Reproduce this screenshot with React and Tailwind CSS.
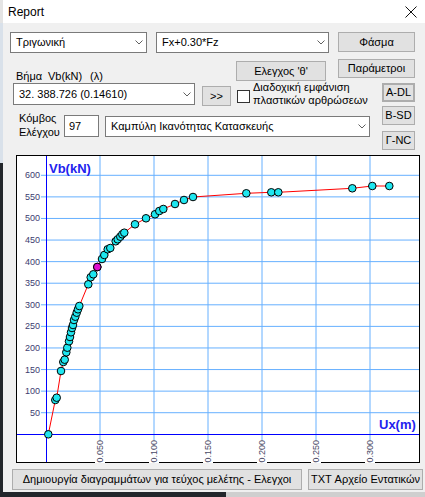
// Report window — capacity curve (pushover) viewer.
// Layout by flow: title, two control rows, control block with side buttons, chart, bottom buttons.

const Y0 = 434.3 // pixel y of Vb = 0
const KY = 0.43167 // px per kN
const yOf = (v) => Y0 - v * KY

// Curve points, page coordinates (chart svg uses a viewBox in page coords).
const PUNTOS = [
  [48.3, 434.3], [55.3, 400], [56.7, 397.7], [61, 371], [63.3, 362], [64.7, 359.7],
  [66.3, 352.3], [67.3, 347.7], [69, 341.3], [70, 337], [71, 332.3], [72, 328],
  [73, 325], [74, 320], [75.3, 316.7], [76.7, 312.7], [78, 309.3], [79.3, 306],
  [88.3, 284.3], [90.7, 277.3], [93.3, 274.3], [97.3, 267], [102, 259], [104.3, 255],
  [107.7, 249.3], [110.3, 248], [115.7, 241.3], [117.7, 239.3], [120.3, 236.7],
  [122.3, 234.3], [124.3, 232.7], [135, 224.3], [146, 218.3], [155, 214.3],
  [159.3, 211], [163.3, 209], [175, 204], [184, 200], [193, 197], [246.3, 193.3],
  [271.3, 192.3], [278.3, 192.3], [352.3, 188.3], [372.3, 186], [389.3, 186],
]
const MAGENTA = [97.3, 267]

const VX = [100, 154, 208, 262, 316, 370]
const XLAB = ['0.050', '0.100', '0.150', '0.200', '0.250', '0.300']
const YV = [50, 100, 150, 200, 250, 300, 350, 400, 450, 500, 550, 600]

function Chevron() {
  return (
    <svg width="8" height="5" viewBox="0 0 8 5" fill="none" stroke="#606060" strokeWidth="1">
      <path d="M0.5 0.5 L4 4 L7.5 0.5" />
    </svg>
  )
}

function Combo({ className, children }) {
  return (
    <div className={`flex items-center justify-between bg-white border border-[#7a7a7a] pl-[5px] pr-[3px] ${className}`}>
      <span className="whitespace-nowrap">{children}</span>
      <Chevron />
    </div>
  )
}

function Boton({ className, children }) {
  return (
    <div className={`flex items-center justify-center bg-[#e1e1e1] border border-[#adadad] whitespace-nowrap ${className}`}>
      {children}
    </div>
  )
}

function Grafico() {
  const linea = PUNTOS.map((p) => p.join(',')).join(' ')
  return (
    <svg width="404" height="308" viewBox="16 155 404 308" className="block">
      <rect x="16.5" y="155.5" width="403" height="307" fill="#fff" stroke="#000" />
      {YV.map((v) => (
        <line key={v} x1="41" x2="419" y1={yOf(v)} y2={yOf(v)} stroke="#66b0ff" strokeWidth="1" />
      ))}
      {VX.map((x) => (
        <line key={x} x1={x} x2={x} y1="156" y2="462" stroke="#66b0ff" strokeWidth="1" />
      ))}
      <line x1="46.5" x2="46.5" y1="156" y2="462" stroke="#0000ff" />
      <line x1="17" x2="419" y1="434.5" y2="434.5" stroke="#0000ff" />
      {YV.map((v) => (
        <text key={v} x="40" y={yOf(v)} textAnchor="end" dominantBaseline="central" fontSize="9" fill="#3c3c70" fontFamily="Liberation Sans, Arial, sans-serif">
          {v}
        </text>
      ))}
      {VX.map((x, i) => (
        <g key={x} transform={`translate(${x},440) rotate(-90)`}>
          <rect x="-23" y="-5" width="23" height="10" fill="#fff" />
          <text x="0" y="0" textAnchor="end" dominantBaseline="central" fontSize="9" fill="#4a4a66" fontFamily="Liberation Sans, Arial, sans-serif">
            {XLAB[i]}
          </text>
        </g>
      ))}
      <text x="49" y="173" fontSize="13" fontWeight="bold" fill="#2222ee" fontFamily="Liberation Sans, Arial, sans-serif">Vb(kN)</text>
      <text x="379" y="429" fontSize="13" fontWeight="bold" fill="#2222ee" fontFamily="Liberation Sans, Arial, sans-serif">Ux(m)</text>
      <polyline points={linea} fill="none" stroke="#ff0000" strokeWidth="1" />
      {PUNTOS.map(([x, y], i) => (
        <circle key={i} cx={x} cy={y} r="3.8" fill="#1fe6ef" stroke="#000" strokeWidth="1" />
      ))}
      <circle cx={MAGENTA[0]} cy={MAGENTA[1]} r="3.8" fill="#e010d0" stroke="#000" strokeWidth="1" />
    </svg>
  )
}

export default function App() {
  return (
    <div className="w-[425px] h-[497px] flex flex-col overflow-hidden font-['Liberation_Sans',Arial,sans-serif] text-[11px] text-black">
      <div className="flex h-[492px]">
        {/* strip of the window behind */}
        <div className="w-[3px] flex flex-col">
          <div className="h-[23px] bg-[#e4e4e4]" />
          <div className="h-[140px] bg-[#d9e1ea]" />
          <div className="flex-1 bg-[#22262b]" />
        </div>

        <div className="flex-1 flex flex-col bg-[#f0f0f0]">
          {/* title bar */}
          <div className="h-[23px] bg-white flex items-center justify-between pl-[5px] pr-[8px]">
            <span className="text-[12px]">Report</span>
            <svg width="12" height="12" viewBox="0 0 12 12" stroke="#111" strokeWidth="1">
              <path d="M0.5 0.5 L11.5 11.5 M11.5 0.5 L0.5 11.5" />
            </svg>
          </div>

          {/* row A */}
          <div className="mt-[9px] flex items-start">
            <Combo className="ml-[7px] w-[137px] h-[21px]">Τριγωνική</Combo>
            <Combo className="ml-[9px] w-[173px] h-[21px]">Fx+0.30*Fz</Combo>
            <Boton className="ml-[9px] w-[77px] h-[20px]">Φάσμα</Boton>
          </div>

          {/* row B */}
          <div className="mt-[6px] flex items-start h-[22px]">
            <div className="ml-[13px] w-[220px] mt-[11px] flex leading-[13px]">
              <span className="w-[32px]">Βήμα</span>
              <span className="w-[42px]">Vb(kN)</span>
              <span>(λ)</span>
            </div>
            <Boton className="mt-[2px] w-[90px] h-[20px]">Ελεγχος 'θ'</Boton>
            <Boton className="ml-[12px] w-[77px] h-[19px]">Παράμετροι</Boton>
          </div>

          {/* block C */}
          <div className="mt-[2px] flex">
            <div className="w-[379px] flex flex-col">
              <div className="h-[23px] flex items-start">
                <Combo className="ml-[10px] w-[182px] h-[22px]">32. 388.726 (0.14610)</Combo>
                <Boton className="ml-[7px] mt-[3px] w-[29px] h-[20px]">&gt;&gt;</Boton>
                <div className="ml-[6px] mt-[7px] w-[13px] h-[13px] bg-white border border-[#333]" />
                <div className="ml-[3px] -mt-[2px] leading-[13px] whitespace-nowrap">
                  Διαδοχική εμφάνιση
                  <br />
                  πλαστικών αρθρώσεων
                </div>
              </div>
              <div className="flex items-start">
                <div className="ml-[16px] mt-[5px] w-[45px] leading-[14px]">
                  Κόμβος
                  <br />
                  Ελέγχου
                </div>
                <div className="mt-[9px] w-[35px] h-[22px] bg-white border border-[#7a7a7a] pl-[4px] flex items-center">97</div>
                <Combo className="ml-[6px] mt-[10px] w-[265px] h-[21px]">Καμπύλη Ικανότητας Κατασκευής</Combo>
              </div>
            </div>
            <div className="flex flex-col">
              <Boton className="w-[33px] h-[19px] border-2 border-[#0078d7]">A-DL</Boton>
              <Boton className="mt-[4px] w-[33px] h-[19px]">B-SD</Boton>
              <Boton className="mt-[6px] w-[33px] h-[19px]">Γ-NC</Boton>
            </div>
          </div>

          {/* chart */}
          <div className="mt-[5px] ml-[13px]">
            <Grafico />
          </div>

          {/* bottom buttons */}
          <div className="mt-[6px] flex">
            <Boton className="ml-[9px] w-[290px] h-[21px]">Δημιουργία διαγραμμάτων για τεύχος μελέτης - Ελεγχοι</Boton>
            <Boton className="ml-[6px] w-[115px] h-[21px] shrink-0">TXT Αρχείο Εντατικών</Boton>
          </div>
        </div>
      </div>
      <div className="flex-1 flex">
        <div className="w-[226px] bg-[#22262b]" />
        <div className="flex-1 bg-[#cfcfcf]" />
      </div>
    </div>
  )
}
